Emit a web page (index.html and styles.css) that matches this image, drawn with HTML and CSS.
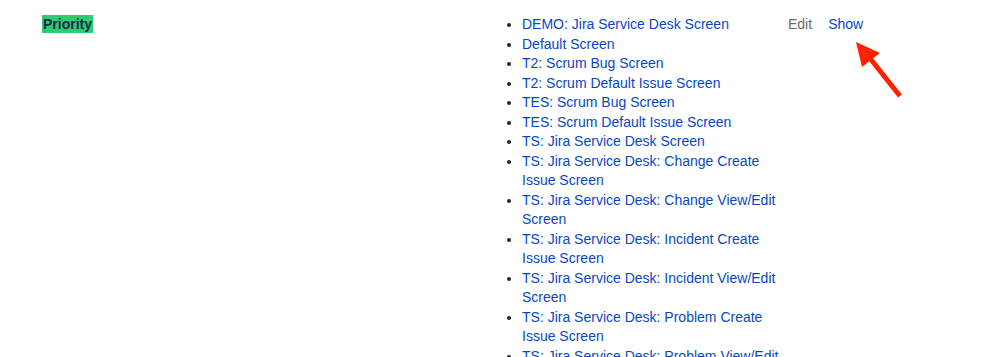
FILE: index.html
```html
<!DOCTYPE html>
<html>
<head>
<meta charset="utf-8">
<link rel="stylesheet" href="styles.css">
</head>
<body>
<div class="row">
  <div class="field"><span class="field-name">Priority</span></div>
  <ul class="screens">
    <li><a>DEMO: Jira Service Desk Screen</a></li>
    <li><a>Default Screen</a></li>
    <li><a>T2: Scrum Bug Screen</a></li>
    <li><a>T2: Scrum Default Issue Screen</a></li>
    <li><a>TES: Scrum Bug Screen</a></li>
    <li><a>TES: Scrum Default Issue Screen</a></li>
    <li><a>TS: Jira Service Desk Screen</a></li>
    <li><a>TS: Jira Service Desk: Change Create Issue Screen</a></li>
    <li><a>TS: Jira Service Desk: Change View/Edit Screen</a></li>
    <li><a>TS: Jira Service Desk: Incident Create Issue Screen</a></li>
    <li><a>TS: Jira Service Desk: Incident View/Edit Screen</a></li>
    <li><a>TS: Jira Service Desk: Problem Create Issue Screen</a></li>
    <li><a>TS: Jira Service Desk: Problem View/Edit Screen</a></li>
  </ul>
  <div class="actions">
    <span class="edit">Edit</span>
    <a class="show">Show</a>
  </div>
</div>
<svg class="arrow" width="60" height="70" viewBox="0 0 60 70">
  <line x1="13" y1="17" x2="52" y2="66" stroke="#ff2200" stroke-width="5"/>
  <polygon points="8,12 32,23 14,37" fill="#ff2200"/>
</svg>
</body>
</html>
```
FILE: styles.css
```css
html, body {
  margin: 0;
  padding: 0;
  background: #ffffff;
  font-family: "Liberation Sans", Arial, sans-serif;
  font-size: 14px;
  line-height: 19.5px;
  overflow: hidden;
}
.row {
  display: grid;
  grid-template-columns: 480px 266px auto;
  padding: 15px 0 0 42px;
}
.field-name {
  font-weight: bold;
  color: #172b4d;
  background: #2ecc71;
  padding: 1px 1px;
}
.screens {
  margin: 0;
  padding: 0;
  list-style: disc outside;
  color: #222;
}
.screens a {
  color: #0747c6;
}
.actions {
  display: flex;
  gap: 16px;
}
.edit {
  color: #6b6b6b;
}
.show {
  color: #0747c6;
}
.arrow {
  position: absolute;
  left: 848px;
  top: 30px;
}
```
